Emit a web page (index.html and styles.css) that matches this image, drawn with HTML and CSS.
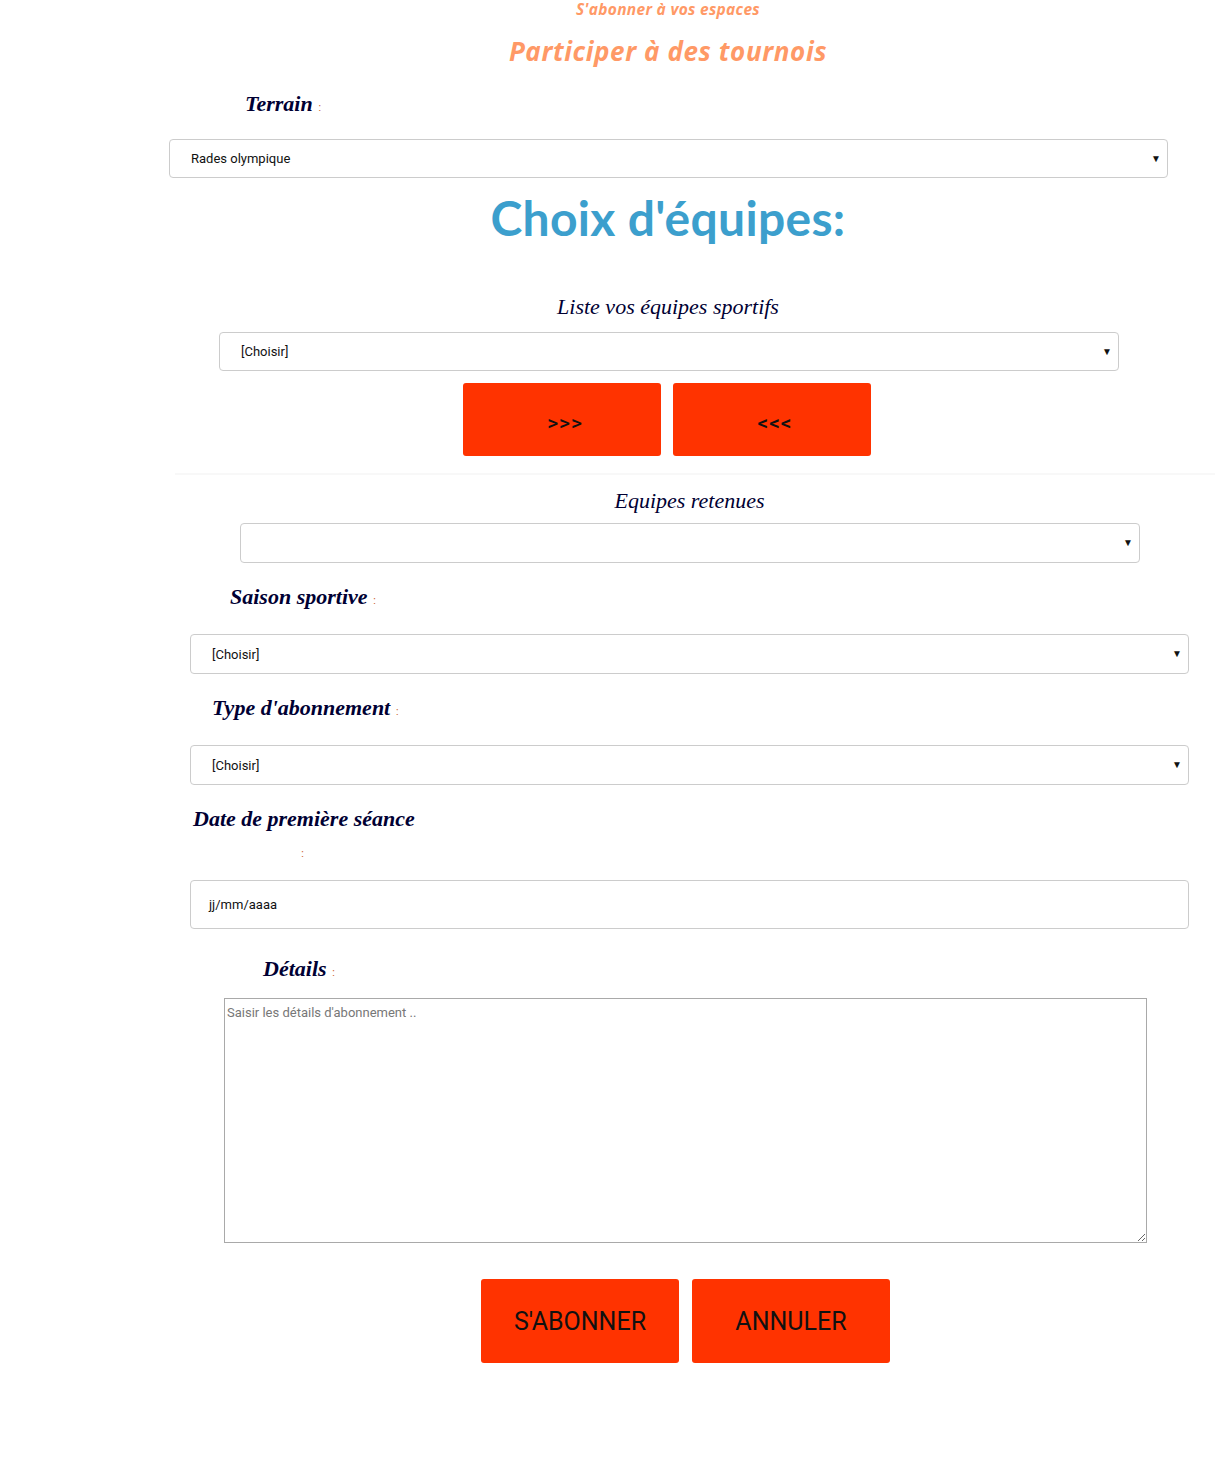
FILE: index.html
```html
<!DOCTYPE html>
<html lang="fr">
<head>
<meta charset="utf-8">
<title>S'abonner</title>
<link rel="stylesheet" href="styles.css">
</head>
<body>
<div class="page">
  <h3 class="subtitle">S'abonner à vos espaces</h3>
  <h2 class="title">Participer à des tournois</h2>

  <div class="label label-terrain">Terrain <span class="colon">:</span></div>
  <div class="select sel-terrain"><span>Rades olympique</span><span class="arrow">▼</span></div>

  <h1 class="choix">Choix d'équipes:</h1>

  <div class="caption cap-liste">Liste vos équipes sportifs</div>
  <div class="select sel-liste"><span>[Choisir]</span><span class="arrow">▼</span></div>

  <div class="move-btns">
    <button class="btn btn-small">&gt;&gt;&gt;</button>
    <button class="btn btn-small">&lt;&lt;&lt;</button>
  </div>

  <hr class="sep">

  <div class="caption cap-retenues">Equipes retenues</div>
  <div class="select sel-retenues"><span></span><span class="arrow">▼</span></div>

  <div class="label label-saison">Saison sportive <span class="colon">:</span></div>
  <div class="select sel-wide"><span>[Choisir]</span><span class="arrow">▼</span></div>

  <div class="label label-type">Type d'abonnement <span class="colon">:</span></div>
  <div class="select sel-wide"><span>[Choisir]</span><span class="arrow">▼</span></div>

  <div class="label label-date">Date de première séance</div>
  <div class="colon colon-date">:</div>
  <div class="date-input">jj/mm/aaaa</div>

  <div class="label label-details">Détails <span class="colon">:</span></div>
  <textarea class="details" placeholder="Saisir les détails d'abonnement .."></textarea>

  <div class="action-btns">
    <button class="btn btn-big">S'ABONNER</button>
    <button class="btn btn-big">ANNULER</button>
  </div>
</div>
</body>
</html>
```
FILE: styles.css
```css
* { box-sizing: border-box; }
html, body { margin: 0; padding: 0; background: #fff; }
body { font-family: "Liberation Serif", serif; }
.page { width: 1231px; height: 1472px; }

.subtitle {
  margin: 0; padding: 1px 0 0 105px;
  font-family: "Open Sans", "DejaVu Sans", sans-serif;
  font-style: italic; font-weight: 700;
  font-size: 15.5px; line-height: 17px;
  color: #ff9966; text-align: center;
  letter-spacing: 0.3px;
}
.title {
  margin: 18px 0 0 0;
  font-family: "Open Sans", "DejaVu Sans", sans-serif;
  font-style: italic; font-weight: 700;
  font-size: 26px; line-height: 30px;
  color: #ff9966; text-align: center;
  padding-left: 105px;
  letter-spacing: 0.6px;
}

.label {
  font-family: "Liberation Serif", serif;
  font-style: italic; font-weight: 700;
  font-size: 22px; line-height: 26px;
  color: #000033;
}
.label .colon, .colon {
  font-family: "Liberation Sans", sans-serif;
  font-style: normal; font-weight: 400;
  font-size: 11px; color: #cc6633;
}
.label-terrain { margin: 25px 0 0 245px; }
.label-saison { margin: 21px 0 0 230px; }
.label-type { margin: 21px 0 0 212px; }
.label-date { margin: 21px 0 0 193px; }
.colon-date { margin: 14px 0 0 301px; line-height: 14px; }
.label-details { margin: 27px 0 0 263px; }

.select {
  display: flex; align-items: center; justify-content: space-between;
  height: 39px; border: 1px solid #cccccc; border-radius: 4px;
  padding: 0 6px 0 21px; background: #fff;
  font-family: "Roboto", "Liberation Sans", sans-serif;
  font-size: 13px; color: #111;
}
.select .arrow { font-size: 10px; color: #111; line-height: 1; }
.sel-terrain { margin: 19px 0 0 169px; width: 999px; }
.sel-liste { margin: 12px 0 0 219px; width: 900px; }
.sel-retenues { margin: 9px 0 0 240px; width: 900px; height: 40px; }
.sel-wide { margin: 21px 0 0 190px; width: 999px; height: 40px; }

.choix {
  margin: 13px 0 0 0;
  font-family: "Lato", "Open Sans", sans-serif;
  font-weight: 700; font-size: 48px; line-height: 54px;
  color: #3c9fcd; text-align: center; padding-left: 105px;
  letter-spacing: 0.3px;
}

.caption {
  font-family: "Liberation Serif", serif; font-style: italic;
  font-size: 22px; line-height: 26px; color: #000033; text-align: center;
}
.cap-liste { margin-top: 49px; padding-left: 105px; }
.cap-retenues { margin-top: 13px; padding-left: 148px; }

.move-btns { display: flex; gap: 12px; margin: 12px 0 0 463px; }
.btn {
  background: #ff3300; border: none; border-radius: 3px;
  font-family: "Roboto", "Liberation Sans", sans-serif; color: #111;
  cursor: pointer;
}
.btn-small { width: 198px; height: 73px; font-size: 21px; font-weight: 500; padding: 6px 0 0 6px; letter-spacing: 1px; }

.sep { margin: 17px 16px 0 175px; border: 0; border-top: 2px solid #f8f8f8; height: 0; }

.date-input {
  margin: 20px 0 0 190px; width: 999px; height: 49px;
  border: 1px solid #cccccc; border-radius: 4px;
  padding: 0 0 0 18px; display: flex; align-items: center;
  font-family: "Roboto", "Liberation Sans", sans-serif; font-size: 13px; color: #111;
}

.details {
  display: block; margin: 13px 0 0 224px; width: 923px; height: 245px;
  border: 1px solid #a9a9a9; border-radius: 0; padding: 6px 2px;
  font-family: "Roboto", "Liberation Sans", sans-serif; font-size: 13px;
  resize: both;
}
.details::placeholder { color: #777; }

.action-btns { display: flex; gap: 13px; margin: 36px 0 0 481px; }
.btn-big { width: 198px; height: 84px; font-size: 25px; }
```
